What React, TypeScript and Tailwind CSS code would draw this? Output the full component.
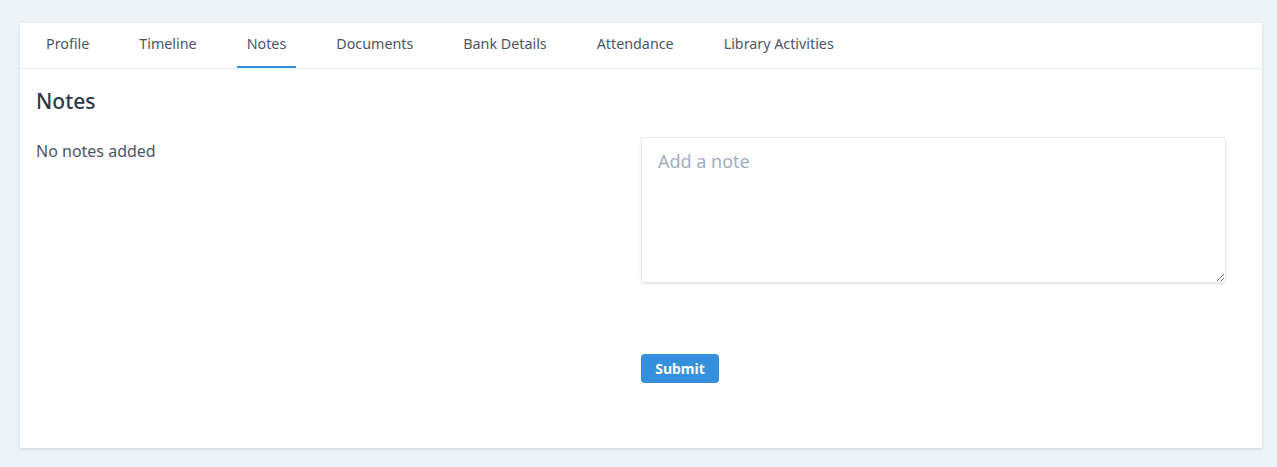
import React from "react";

const tabs = [
  "Profile",
  "Timeline",
  "Notes",
  "Documents",
  "Bank Details",
  "Attendance",
  "Library Activities",
];

const App: React.FC = () => {
  return (
    <div
      className="min-h-[467px] bg-[#edf2f7] pl-5 pr-[15px] pt-[23px] pb-5"
      style={{ fontFamily: '"Noto Sans", "Open Sans", sans-serif' }}
    >
      <div className="bg-white shadow-[0_1px_3px_rgba(0,0,0,0.12)] h-[425px]">
        <nav className="flex gap-[30px] px-4 border-b border-[#e8eef4] h-[46px]">
          {tabs.map((t) => (
            <div
              key={t}
              className={
                t === "Notes"
                  ? "flex items-center px-2.5 pb-[2px] text-[14.3px] text-[#4a5568] border-b-2 border-[#3490dc]"
                  : "flex items-center px-2.5 pb-[4px] text-[14.3px] text-[#4a5568]"
              }
            >
              {t}
            </div>
          ))}
        </nav>
        <div className="px-4 pt-[18px]">
          <h2 className="text-[21px] leading-7 font-medium text-[#2d3748]">Notes</h2>
          <div className="flex mt-[22px]">
            <div className="w-1/2 pt-[2px] text-[16px] leading-6 text-[#4a5568]">
              No notes added
            </div>
            <div className="w-1/2 pr-5">
              <textarea
                placeholder="Add a note"
                className="block w-full h-[146px] rounded border border-[#e2e8f0] shadow-[0_1px_3px_rgba(0,0,0,0.1)] px-4 py-[10px] text-[18px] text-[#4a5568] placeholder:text-[#a0aec0] outline-none"
              />
              <button className="mt-[71px] h-[29px] w-[78px] rounded bg-[#3490dc] text-white text-[14px] font-bold">
                Submit
              </button>
            </div>
          </div>
        </div>
      </div>
    </div>
  );
};

export default App;
